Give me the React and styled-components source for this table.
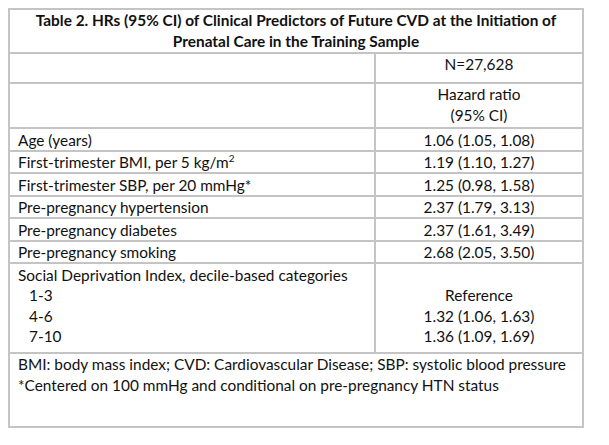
import React from "react";
import styled, { createGlobalStyle } from "styled-components";

const GlobalStyle = createGlobalStyle`
  * { box-sizing: border-box; }
  body {
    margin: 8px;
    background: #ffffff;
    font-family: "Lato", "Liberation Sans", sans-serif;
    color: #111111;
  }
`;

const line = "2px solid #c4c4c4";

const Frame = styled.div`
  width: 576px;
  border: ${line};
  font-size: 15.4px;
  line-height: 20.5px;
`;

const Title = styled.div`
  height: 44px;
  font-weight: 700;
  line-height: 21px;
  text-align: center;
  border-bottom: ${line};
`;

const Row = styled.div`
  display: grid;
  grid-template-columns: 366px 1fr;
  height: ${(p) => p.$h}px;
  border-bottom: ${line};
`;

const Label = styled.div`
  padding: ${(p) => p.$pt || 0}px 0 0 8px;
  border-right: ${line};
`;

const Value = styled.div`
  padding-top: ${(p) => p.$pt || 0}px;
  text-align: center;
`;

const Line = styled.div`
  padding-left: ${(p) => (p.$indent ? 11 : 0)}px;
`;

const Sup = styled.sup`
  font-size: 10px;
  line-height: 0;
`;

const Footer = styled.div`
  height: 72px;
  padding: 0 8px;
  line-height: 21px;
`;

const rows = [
  ["Age (years)", "1.06 (1.05, 1.08)"],
  [<>First-trimester BMI, per 5 kg/m<Sup>2</Sup></>, "1.19 (1.10, 1.27)"],
  ["First-trimester SBP, per 20 mmHg*", "1.25 (0.98, 1.58)"],
  ["Pre-pregnancy hypertension", "2.37 (1.79, 3.13)"],
  ["Pre-pregnancy diabetes", "2.37 (1.61, 3.49)"],
  ["Pre-pregnancy smoking", "2.68 (2.05, 3.50)"],
];

const groups = [
  ["1-3", "Reference"],
  ["4-6", "1.32 (1.06, 1.63)"],
  ["7-10", "1.36 (1.09, 1.69)"],
];

export default function App() {
  return (
    <>
      <GlobalStyle />
      <Frame>
        <Title>
          Table 2. HRs (95% CI) of Clinical Predictors of Future CVD at the Initiation of
          <br />
          Prenatal Care in the Training Sample
        </Title>
        <Row $h={30}>
          <Label />
          <Value>N=27,628</Value>
        </Row>
        <Row $h={45}>
          <Label />
          <Value>
            Hazard ratio
            <br />
            (95% CI)
          </Value>
        </Row>
        {rows.map(([label, value], i) => (
          <Row key={i} $h={22.5}>
            <Label $pt={0.5}>{label}</Label>
            <Value $pt={0.5}>{value}</Value>
          </Row>
        ))}
        <Row $h={90}>
          <Label $pt={0.5}>
            <Line>Social Deprivation Index, decile-based categories</Line>
            {groups.map(([g]) => (
              <Line key={g} $indent>{g}</Line>
            ))}
          </Label>
          <Value $pt={0.5}>
            <Line>&nbsp;</Line>
            {groups.map(([g, v]) => (
              <Line key={g}>{v}</Line>
            ))}
          </Value>
        </Row>
        <Footer>
          BMI: body mass index; CVD: Cardiovascular Disease; SBP: systolic blood pressure
          <br />
          *Centered on 100 mmHg and conditional on pre-pregnancy HTN status
        </Footer>
      </Frame>
    </>
  );
}
